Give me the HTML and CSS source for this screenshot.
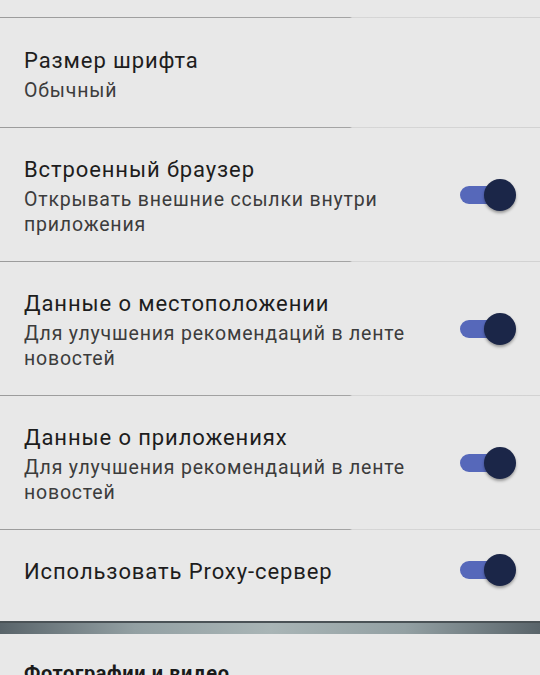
FILE: index.html
```html
<!DOCTYPE html>
<html lang="ru">
<head>
    <meta charset="UTF-8">
    <meta name="viewport" content="width=device-width, initial-scale=1.0">
    <title>Настройки</title>
    <link rel="stylesheet" href="styles.css">
</head>
<body>
    <main class="settings">
        <div class="top-gap"></div>
        <div class="divider"></div>

        <div class="row">
            <div class="row-text">
                <div class="title">Размер шрифта</div>
                <div class="sub">Обычный</div>
            </div>
        </div>
        <div class="divider"></div>

        <div class="row">
            <div class="row-text">
                <div class="title">Встроенный браузер</div>
                <div class="sub">Открывать внешние ссылки внутри приложения</div>
            </div>
            <div class="switch on"><span class="track"></span><span class="thumb"></span></div>
        </div>
        <div class="divider"></div>

        <div class="row">
            <div class="row-text">
                <div class="title">Данные о местоположении</div>
                <div class="sub">Для улучшения рекомендаций в ленте новостей</div>
            </div>
            <div class="switch on"><span class="track"></span><span class="thumb"></span></div>
        </div>
        <div class="divider"></div>

        <div class="row">
            <div class="row-text">
                <div class="title">Данные о приложениях</div>
                <div class="sub">Для улучшения рекомендаций в ленте новостей</div>
            </div>
            <div class="switch on"><span class="track"></span><span class="thumb"></span></div>
        </div>
        <div class="divider"></div>

        <div class="row row-single">
            <div class="row-text">
                <div class="title">Использовать Proxy-сервер</div>
            </div>
            <div class="switch on"><span class="track"></span><span class="thumb"></span></div>
        </div>

        <div class="section-break"></div>

        <div class="section-head">Фотографии и видео</div>
    </main>
</body>
</html>
```

FILE: styles.css
```css
html, body {
    margin: 0;
    padding: 0;
}
body {
    width: 540px;
    height: 675px;
    overflow: hidden;
    background: #e8e8e8;
    font-family: Roboto, "Noto Sans", "Liberation Sans", sans-serif;
    color: #1f1f1f;
}
.settings {
    display: flex;
    flex-direction: column;
}
.top-gap {
    height: 17px;
}
.divider {
    height: 1px;
    background: linear-gradient(to right, #9c9c9c 0, #a4a4a4 350px, #d6d6d6 352px, #d2d2d2 100%);
}
.row {
    display: flex;
    align-items: center;
    padding: 28px 24px 24px;
    min-height: 57px;
}
.row-single {
    padding: 22px 24px 28px;
    min-height: 40px;
}
.row-text {
    flex: 1;
    padding-right: 20px;
}
.title {
    font-size: 22px;
    letter-spacing: 0.9px;
    line-height: 28px;
    color: #1d1d1d;
}
.sub {
    margin-top: 3px;
    font-size: 19.5px;
    letter-spacing: 0.8px;
    line-height: 25px;
    color: #3c3c3c;
    max-width: 400px;
}

/* toggle switch, on state */
.switch {
    position: relative;
    width: 56px;
    height: 32px;
    flex: none;
    margin-top: -4px;
}
.switch .track {
    position: absolute;
    left: 0;
    top: 7px;
    width: 44px;
    height: 18px;
    border-radius: 9px;
    background: #5668ba;
}
.switch .thumb {
    position: absolute;
    right: 0;
    top: 0;
    width: 32px;
    height: 32px;
    border-radius: 50%;
    background: #1b2648;
    box-shadow: 0 2px 3px rgba(0, 0, 0, 0.35);
}

.section-break {
    height: 11px;
    margin-top: 1px;
    border-top: 2px solid #4a5256;
    background: linear-gradient(to right, #59646a 0, #93a0a3 25%, #a9b5b6 50%, #93a0a3 75%, #59646a 100%);
}
.section-head {
    padding: 27px 24px 0;
    font-size: 20px;
    letter-spacing: 0.6px;
    font-weight: 700;
    color: #1a1a1a;
}
```
